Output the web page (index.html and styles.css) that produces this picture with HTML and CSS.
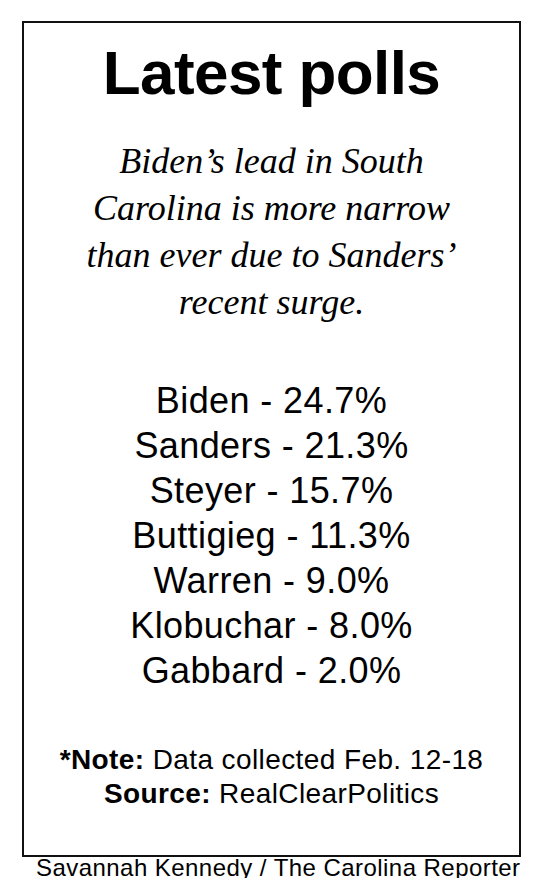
FILE: index.html
```html
<!DOCTYPE html>
<html lang="en">

<head>
    <meta charset="UTF-8">
    <meta name="viewport" content="width=device-width, initial-scale=1.0">
    <title>Latest polls</title>

    <link rel="stylesheet" href="styles.css">
</head>

<body>

    <div class="graphic">
        <div class="panel">
            <h1 class="title">Latest polls</h1>
            <p class="dek">Biden’s lead in South<br>Carolina is more narrow<br>than ever due to Sanders’<br>recent surge.</p>

            <ul class="polls">
                <li>Biden - 24.7%</li>
                <li>Sanders - 21.3%</li>
                <li>Steyer - 15.7%</li>
                <li>Buttigieg - 11.3%</li>
                <li>Warren - 9.0%</li>
                <li>Klobuchar - 8.0%</li>
                <li>Gabbard - 2.0%</li>
            </ul>

            <p class="note"><strong>*Note:</strong> Data collected Feb. 12-18<br><strong>Source:</strong> RealClearPolitics</p>
        </div>
        <p class="credit">Savannah Kennedy / The Carolina Reporter</p>
    </div>

</body>

</html>
```

FILE: styles.css
```css
body {
    margin: 0;
    background-color: #fff;
    color: #000;
    font-family: "Liberation Sans", Arial, sans-serif;
}

.graphic {
    padding-top: 21px;
}

.panel {
    box-sizing: border-box;
    width: 499px;
    height: 836px;
    margin-left: 22px;
    padding-top: 15px;
    border: 2px solid #111;
    text-align: center;
}

.title {
    margin: 0;
    font-size: 62px;
    line-height: 70px;
    font-weight: 700;
    letter-spacing: -0.6px;
}

.dek {
    margin: 30px 0 0;
    font-family: "Liberation Serif", "Times New Roman", serif;
    font-style: italic;
    font-size: 36px;
    line-height: 47px;
}

.polls {
    list-style: none;
    margin: 52px 0 0;
    padding: 0;
    font-size: 36px;
    line-height: 45px;
    letter-spacing: 0.4px;
}

.note {
    margin: 50px 0 0;
    font-size: 28px;
    line-height: 34px;
    letter-spacing: 0.4px;
}

.credit {
    margin: 0;
    padding-left: 36px;
    font-size: 24px;
    line-height: 21px;
    letter-spacing: 0.45px;
    white-space: nowrap;
}
```
